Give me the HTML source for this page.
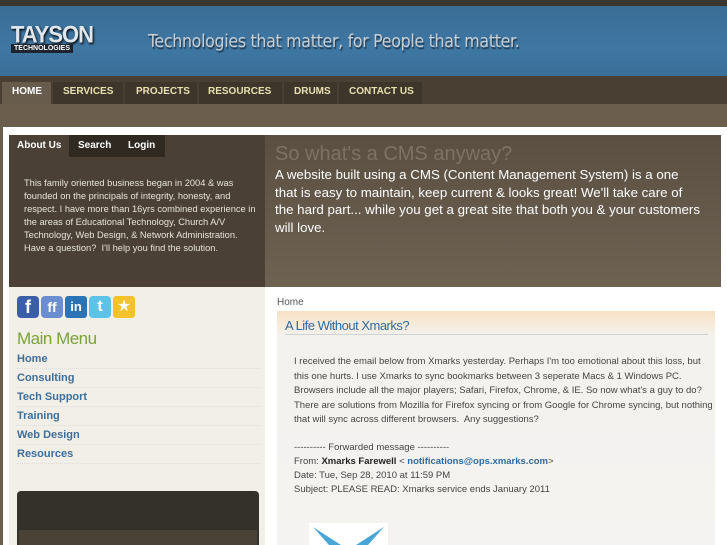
<!DOCTYPE html>
<html><head><meta charset="utf-8"><style>
*{margin:0;padding:0;box-sizing:border-box}
body{width:727px;height:545px;overflow:hidden;background:#6a5d4d;font-family:"Liberation Sans",sans-serif;position:relative}
.a{position:absolute}
</style></head><body>
<div class="a" style="left:0;top:0;width:727px;height:6px;background:#3b3730"></div>
<div class="a" style="left:0;top:6px;width:727px;height:70px;background:linear-gradient(#3a6d96,#3f77a3 60%,#3a6f99)"></div>
<div class="a" style="left:11px;top:22px;font:bold 22px 'Liberation Sans',sans-serif;color:#dfe6ee;letter-spacing:-1px;text-shadow:1px 1px 2px #000;transform:scaleY(1.1)">TAYSON</div>
<div class="a" style="left:11px;top:44px;font:bold 7px 'Liberation Sans',sans-serif;color:#fff;background:#1d2430;padding:1px 3px">TECHNOLOGIES</div>
<div class="a" style="left:148px;top:32px;font:17.6px 'DejaVu Sans Condensed','Liberation Sans Narrow',sans-serif;color:#c9cfd3;text-shadow:1px 2px 1px #1d3850;letter-spacing:-0.3px">Technologies that matter, for People that matter.</div>
<div class="a" style="left:0;top:76px;width:727px;height:28px;background:#4a3f33"></div>
<div class="a" style="left:0;top:104px;width:727px;height:24px;background:#6b5e4d"></div>
<div class="a" style="top:82px;left:2px;display:flex;font:bold 10px 'Liberation Sans',sans-serif;color:#e8e0b0">
<div style="background:#685c4c;color:#fff;width:49px;height:22px;padding:4px 0 0 10px">HOME</div>
<div style="background:#3e352b;width:70px;margin-left:2px;height:22px;padding:4px 0 0 10px">SERVICES</div>
<div style="background:#3e352b;width:72px;margin-left:2px;height:22px;padding:4px 0 0 11px">PROJECTS</div>
<div style="background:#3e352b;width:83px;margin-left:2px;height:22px;padding:4px 0 0 9px">RESOURCES</div>
<div style="background:#3e352b;width:53px;margin-left:2px;height:22px;padding:4px 0 0 10px">DRUMS</div>
<div style="background:#3e352b;width:83px;margin-left:2px;height:22px;padding:4px 0 0 10px">CONTACT US</div>
</div>
<div class="a" style="left:3px;top:127px;width:724px;height:418px;background:#fff"></div>
<div class="a" style="left:9px;top:135px;width:256px;height:152px;background:#4a4035"></div>
<div class="a" style="left:265px;top:135px;width:456px;height:152px;background:linear-gradient(#5a4f40,#6e6253)"></div>
<div class="a" style="left:9px;top:135px;display:flex;font:bold 10px 'Liberation Sans',sans-serif;color:#fff">
<div style="width:60px;height:22px;padding:5px 0 0 8px;background:#4a4035">About Us</div>
<div style="width:50px;height:22px;padding:5px 0 0 9px;background:#2f2921">Search</div>
<div style="width:46px;height:22px;padding:5px 0 0 9px;background:#2f2921">Login</div>
</div>
<div class="a" style="left:24px;top:177px;width:232px;font:9.3px/13px 'Liberation Sans',sans-serif;color:#e8e4dc">This family oriented business began in 2004 &amp; was founded on the principals of integrity, honesty, and respect. I have more than 16yrs combined experience in the areas of Educational Technology, Church A/V Technology, Web Design, &amp; Network Administration. Have a question?&nbsp; I'll help you find the solution.</div>
<div class="a" style="left:275px;top:143px;font:20px 'Liberation Sans',sans-serif;color:#7d7264">So what's a CMS anyway?</div>
<div class="a" style="left:275px;top:166px;width:428px;font:13.3px/17.7px 'Liberation Sans',sans-serif;color:#fff">A website built using a CMS (Content Management System) is a one that is easy to maintain, keep current &amp; looks great! We'll take care of the hard part... while you get a great site that both you &amp; your customers will love.</div>
<div class="a" style="left:9px;top:287px;width:256px;height:258px;background:#f2efe9"></div>
<div class="a" style="left:17px;top:296px;display:flex;gap:2px">
<div style="width:22px;height:22px;border-radius:4px;background:#3b5ea8;color:#fff;font:bold 18px/22px sans-serif;text-align:center">f</div>
<div style="width:22px;height:22px;border-radius:4px;background:#6a8ed0;color:#fff;font:bold 14px/22px sans-serif;text-align:center">ff</div>
<div style="width:22px;height:22px;border-radius:3px;background:#2a74b5;color:#fff;font:bold 13px/22px sans-serif;text-align:center">in</div>
<div style="width:22px;height:22px;border-radius:4px;background:#5dc2e8;color:#fff;font:bold 16px/22px sans-serif;text-align:center">t</div>
<div style="width:22px;height:22px;border-radius:3px;background:#f5c22c;color:#fff;font:16px/22px sans-serif;text-align:center">★</div>
</div>
<div class="a" style="left:17px;top:329px;font:17px 'Liberation Sans',sans-serif;color:#7aa23a;letter-spacing:-0.5px">Main Menu</div>
<div class="a" style="left:17px;top:350px;width:242px;font:bold 11px 'Liberation Sans',sans-serif;color:#3d6e9a">
<div style="height:19px;padding-top:3px;border-bottom:1px dotted #ddd">Home</div>
<div style="height:19px;padding-top:3px;border-bottom:1px dotted #ddd">Consulting</div>
<div style="height:19px;padding-top:3px;border-bottom:1px dotted #ddd">Tech Support</div>
<div style="height:19px;padding-top:3px;border-bottom:1px dotted #ddd">Training</div>
<div style="height:19px;padding-top:3px;border-bottom:1px dotted #ddd">Web Design</div>
<div style="height:19px;padding-top:3px;border-bottom:1px dotted #ddd">Resources</div>
</div>
<div class="a" style="left:17px;top:491px;width:242px;height:54px;background:#34302a;border-radius:4px 4px 0 0"></div>
<div class="a" style="left:19px;top:530px;width:238px;height:15px;background:#4a4236"></div>
<div class="a" style="left:277px;top:297px;font:10px 'Liberation Sans',sans-serif;color:#555">Home</div>
<div class="a" style="left:277px;top:311px;width:438px;height:234px;background:linear-gradient(#f7e2c4,#f4f2ee 25px,#f4f3f1)"></div>
<div class="a" style="left:285px;top:318px;font:13px 'Liberation Sans',sans-serif;color:#2f6aa0;letter-spacing:-0.5px">A Life Without Xmarks?</div>
<div class="a" style="left:285px;top:334px;width:423px;height:1px;background:#cfd2d4"></div>
<div class="a" style="left:294px;top:355px;width:423px;font:9.5px/14.5px 'Liberation Sans',sans-serif;color:#444">I received the email below from Xmarks yesterday. Perhaps I'm too emotional about this loss, but this one hurts. I use Xmarks to sync bookmarks between 3 seperate Macs &amp; 1 Windows PC. Browsers include all the major players; Safari, Firefox, Chrome, &amp; IE. So now what's a guy to do? There are solutions from Mozilla for Firefox syncing or from Google for Chrome syncing, but nothing that will sync across different browsers.&nbsp; Any suggestions?</div>
<div class="a" style="left:294px;top:441px;font:9.5px/14px 'Liberation Sans',sans-serif;color:#444">---------- Forwarded message ----------<br>From: <b style="color:#222">Xmarks Farewell</b> &lt; <b style="color:#2f6aa0">notifications@ops.xmarks.com</b>&gt;<br>Date: Tue, Sep 28, 2010 at 11:59 PM<br>Subject: PLEASE READ: Xmarks service ends January 2011</div>
<div class="a" style="left:309px;top:523px;width:79px;height:22px;background:#fff"></div>
<svg class="a" style="left:309px;top:523px" width="79" height="22"><path d="M4 4 L32 22 L20 22 Z" fill="#4aa6d8"/><path d="M75 4 L47 22 L59 22 Z" fill="#4aa6d8"/></svg>
</body></html>
